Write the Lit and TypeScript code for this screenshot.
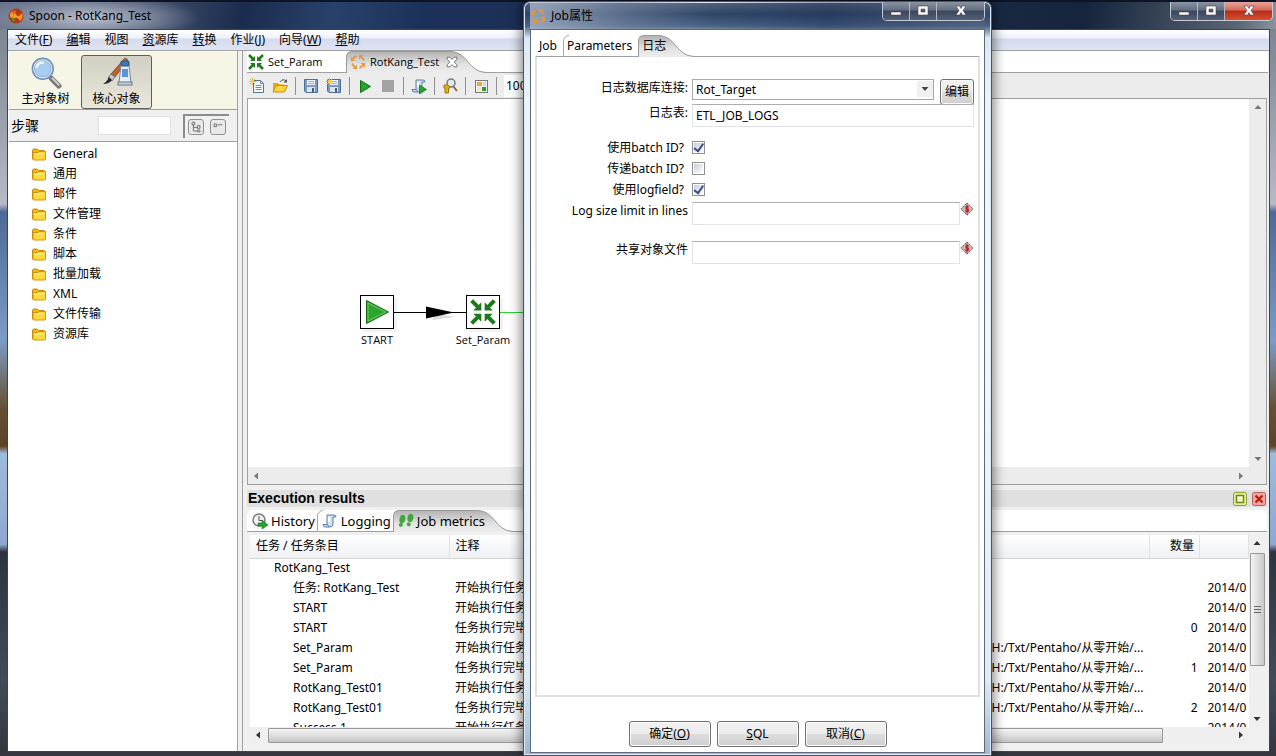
import { LitElement, html, svg, css } from "lit";
import { customElement } from "lit/decorators.js";
import { classMap } from "lit/directives/class-map.js";

const arrowsIn = svg`<g fill="none" stroke="#1c7a1c" stroke-width="2.500"><path d="M1 1l4 4M15 1l-4 4M1 15l4-4M15 15l-4-4"/></g>
  <g fill="#1c7a1c"><path d="M7 2v5H2zM9 2v5h5zM7 14V9H2zM9 14V9h5z"/></g>`;
const arrowsOut = svg`<g fill="none" stroke="#e8963c" stroke-width="1.800"><path d="M3 4.500l3.500-2.500M11.500 3l2.500 3.500M13 11.500l-3.500 2.500M4.500 13l-2.500-3.500"/></g>
  <g fill="#e8963c"><path d="M1 2.500v4.500h4.500zM13.500 1H9v4.500zM15 13.500V9h-4.500zM2.500 15H7v-4.500z"/></g>`;
const folder = svg`<path d="M1.500 4.500q0-1.500 1.500-1.500h3l1.500 1.500h5q1.500 0 1.500 1.500v7h-12.500z" fill="#f2b90c" stroke="#c4850a"/>
  <path d="M2 6.500h5l1-1h6.500v7.500q0 1-1 1h-10.500q-1 0-1-1z" fill="#ffd93a" stroke="#d09510"/><path d="M3 8h10" stroke="#fff2a0"/>`;
const star = svg`<path d="M3.500 0v7M0 3.500h7M1 1l5 5M6 1l-5 5" stroke="#f0a81c" stroke-width="1"/><circle cx="3.500" cy="3.500" r="1.800" fill="#ffd040"/>`;
const floppy = svg`<path d="M1.500 1.500h13v13h-11.500l-1.500-1.500z" fill="#7d9cbd" stroke="#4f6f92"/><rect x="4" y="2" width="8" height="5" fill="#eef4fa"/><path d="M5 3.500h6M5 5.500h6" stroke="#9bb2c8"/><rect x="4" y="9" width="8" height="5" fill="#dce5ee"/><rect x="9" y="10" width="2" height="4" fill="#3f5f82"/>`;
const scroll = svg`<path d="M5 2h7q2 0 2 2h-3v7q0 3-3 3H3q-2 0-2-2.500h4z" fill="#cfe0f2" stroke="#5f7ea4"/><path d="M3 11.500q3-1 4 2.500" fill="none" stroke="#5f7ea4"/><path d="M7 4v5" stroke="#fff" stroke-width="2"/>`;
const greenPlay = svg`<path d="M3.500 2.500v12l10-6z" fill="#24a52c" stroke="#0d7016"/>`;

const icons: Record<string, unknown> = {
  arrowsIn, arrowsOut, folder,
  spoon: svg`<circle cx="8" cy="8" r="7.500" fill="#b33a0e"/><path d="M2 5q4-4 6 1t6-1q2 4-2 8-2-4-5-3t-5-1z" fill="#f39a2c"/><path d="M3 9q3 0 4 4-3 1-4-4z" fill="#4f9a2f"/><circle cx="6" cy="4" r="2" fill="#e05a1e"/>`,
  newFile: svg`<path d="M4.500 2.500h7l3 3v9h-10z" fill="#f6f9fc" stroke="#5b738c"/><path d="M11.500 2.500v3h3M6.500 7.500h6M6.500 9.500h6M6.500 11.500h6" fill="none" stroke="#7289a0"/>${star}`,
  open: svg`<path d="M1 5h5l1.500 1.500H12V14H1z" fill="#e8a80e"/><path d="M1 14l3-6.500h11.500L12.500 14z" fill="#ffd43a" stroke="#d08a0c"/><path d="M8 4q3-4 6-1" fill="none" stroke="#555"/><path d="M15 1v3.500h-3.500z" fill="#555"/>`,
  save: floppy,
  saveAs: svg`${floppy}${star}`,
  play: greenPlay,
  stop: svg`<rect x="2" y="2" width="12" height="12" fill="#a3a3a3"/>`,
  replay: svg`${scroll}<path d="M8.500 7v9l7-4.500z" fill="#24a52c" stroke="#0d7016" stroke-width=".7"/>`,
  inspect: svg`<circle cx="9" cy="5" r="4" fill="#e2eaf0" stroke="#777" stroke-width="1.500"/><path d="M11 8l4 5" stroke="#886a3a" stroke-width="2"/><path d="M2 7h4l2 2v1H6.500v5H3v-5H2z" fill="#e4b010" stroke="#9c7408"/>`,
  results: svg`<rect x="2.500" y="2.500" width="12" height="12" fill="#f4f4f4" stroke="#777"/><rect x="4" y="4" width="5" height="4" fill="#e8a83c"/><rect x="9" y="9" width="4" height="4" fill="#2d9a40"/><path d="M4 9h4v4H4z" fill="#f4e8b8"/><path d="M10 4h3v4h-3z" fill="#c9d9ec"/>`,
  magnifier: svg`<path d="M20 20l7 7" stroke="#777" stroke-width="5" stroke-linecap="round"/><path d="M21 20l6 6" stroke="#ccc" stroke-width="2" stroke-linecap="round"/><circle cx="12" cy="11" r="9" fill="#a8cdf0" stroke="#7292bd" stroke-width="3"/><circle cx="12" cy="11" r="8.500" fill="none" stroke="#e8f2ff"/><path d="M6 10q1-5 7-5" fill="none" stroke="#fff" stroke-width="2"/>`,
  paint: svg`<path d="M24 1l3 2-13 17-4-3z" fill="#b9652a" stroke="#6d3510" stroke-width=".7"/><path d="M10 17l4 3-3 4-4-3z" fill="#c8c8c8" stroke="#777"/><path d="M8 20l3 3q-3 4-9 4 4-2 6-7z" fill="#222"/><path d="M20 8h8l2 18H18z" fill="#e6edf6" stroke="#7088a8"/><rect x="20" y="4" width="8" height="5" rx="1" fill="#3d78be" stroke="#25558f"/><rect x="21" y="12" width="6" height="8" fill="#5a93d6"/><rect x="17" y="25" width="14" height="3" fill="#c7ced8" stroke="#69788c"/>`,
  expand: svg`<path d="M3.500 2.500h3v3h-3zM5 5.500v7h4M5 8.500h4M9.500 6.500h3v3h-3zM9.500 11.500h3v2h-3z" fill="none" stroke="#666"/>`,
  collapse: svg`<path d="M3.500 4.500h3v3h-3zM8 5.500h5" fill="none" stroke="#666"/>`,
  history: svg`<circle cx="7" cy="7" r="6" fill="#f2f2f2" stroke="#7a7a7a" stroke-width="1.500"/><path d="M7 3v4.500h3" fill="none" stroke="#555"/><path d="M6 10h4V7l6 5-6 4v-3H6z" fill="#24a52c" stroke="#0d7016" stroke-width=".6"/>`,
  logging: scroll,
  feet: svg`<g fill="#3fa63f" transform="rotate(15 8 8)"><ellipse cx="4" cy="7" rx="2.900" ry="4.200"/><ellipse cx="4" cy="13" rx="2" ry="2"/><ellipse cx="11.500" cy="4" rx="2.900" ry="4.200"/><ellipse cx="11.500" cy="10.500" rx="2" ry="2"/></g>`,
  close: svg`<path d="M2.500 2.500h3l2.500 2.500 2.500-2.500h3v2.500l-3 3 3 3v2.500h-3L8 11l-2.500 2.500h-3V11l3-3-3-3z" fill="#fff" stroke="#666"/>`,
  maximize: svg`<rect x="1.500" y="1.500" width="13" height="13" rx="2" fill="#e3ef9c" stroke="#8aa02c"/><rect x="4.500" y="4.500" width="7" height="7" fill="#f4fad0" stroke="#71891c" stroke-width="1.500"/>`,
  shut: svg`<rect x="1.500" y="1.500" width="13" height="13" rx="2" fill="#f2a79c" stroke="#b36060"/><path d="M4.500 4.500l7 7M11.500 4.500l-7 7" stroke="#b81e10" stroke-width="2.400"/>`,
  variable: svg`<path d="M8 1L15 8 8 15 1 8z" fill="#c5bcae" stroke="#333" stroke-dasharray="2 1"/><path d="M10 5.500H7v2.500h2.500v2.500H6M8 3v10" fill="none" stroke="#c01030" stroke-width="1.300"/>`,
  up: svg`<path d="M4.500 10l3.500-4 3.500 4z" fill="currentColor"/>`,
  down: svg`<path d="M4.500 6l3.500 4 3.500-4z" fill="currentColor"/>`,
  left: svg`<path d="M10 4.500l-4 3.500 4 3.500z" fill="currentColor"/>`,
  right: svg`<path d="M6 4.500l4 3.500-4 3.500z" fill="currentColor"/>`,
  wmin: svg`<path d="M3 9h10v3H3z" fill="#fff" stroke="#445" stroke-width=".6"/>`,
  wmax: svg`<path d="M3 3h10v9H3zM6 6v3h4V6z" fill="#fff" fill-rule="evenodd" stroke="#445" stroke-width=".6"/>`,
  wclose: svg`<path d="M3 3h3.500L8 5.500 9.500 3H13l-3 4.500 3 4.500H9.500L8 9.500 6.500 12H3l3-4.500z" fill="#fff" stroke="#445" stroke-width=".6"/>`,
};

const icon = (name: string, size = 16, box = 16) =>
  html`<svg class="icon" width=${size} height=${size} viewBox="0 0 ${box} ${box}" aria-hidden="true">${icons[name]}</svg>`;

const tabShape = (w: number) => html`<svg class="shape" width=${w} height="22" viewBox="0 0 ${w} 22" aria-hidden="true">
  <defs><linearGradient id="tabfill" x1="0" y1="0" x2="0" y2="1"><stop offset="0" stop-color="#b2b2b2"/><stop offset=".6" stop-color="#e2e2e2"/><stop offset="1" stop-color="#ececec"/></linearGradient></defs>
  <path d="M.5 22V6Q.5.5 6 .5H${w - 35}C${w - 18} 1 ${w - 18} 21 ${w} 21.500V22z" fill="url(#tabfill)"/>
  <path d="M.5 22V6Q.5.5 6 .5H${w - 35}C${w - 18} 1 ${w - 18} 21 ${w} 21.500" fill="none" stroke="#9a9a9a"/></svg>`;
const divider = html`<svg class="divider" width="8" height="22" viewBox="0 0 8 22" aria-hidden="true"><path d="M.5 22V6Q1 1 6 .5" fill="none" stroke="#a5a5a5"/></svg>`;

const common = css`
  * { box-sizing: border-box; }
  button, input, select { font: inherit; color: inherit; }
  button { border: 0; padding: 0; margin: 0; background: none; white-space: nowrap; }
  .icon { display: block; flex: none; }
  .caption { display: flex; border: 1px solid #c3cad6; border-top: 0; border-radius: 0 0 5px 5px; overflow: hidden; height: 19px; flex: none; }
  .caption button { display: grid; place-items: center; width: 27px; border-right: 1px solid #b0b8c6; background: linear-gradient(#8b94a3, #626d80 45%, #3a465b 50%, #536077); }
  .caption button:last-child { width: 47px; border-right: 0; }
  .tab { position: relative; display: flex; align-items: center; height: 22px; flex: none; }
  .tab > * { position: relative; }
  .tab .shape { position: absolute; left: 0; top: 0; }
  .tab .divider { position: absolute; left: 0; top: 0; }
  .push { display: grid; place-items: center; border: 1px solid #707070; border-radius: 3px; box-shadow: inset 0 0 0 1px #fbfbfb; background: linear-gradient(#f2f2f2, #ebebeb 48%, #dddddd 50%, #cfcfcf); }
`;

const caption = () => html`<div class="caption">
  <button aria-label="最小化">${icon("wmin")}</button><button aria-label="最大化">${icon("wmax")}</button><button class="x" aria-label="关闭">${icon("wclose")}</button></div>`;

@customElement("job-dialog")
class JobDialog extends LitElement {
  static styles = [common, css`
    :host { display: flex; flex-direction: column; padding: 0 6px 2px 6px; border: 1px solid #4c5563; border-radius: 7px 7px 0 0; box-shadow: inset 0 0 0 1px #dfe9f4, 0 0 12px 2px rgba(0,0,0,.5);
      background: linear-gradient(#56647c, #2f4668 12px, #4b6284 24px, #d9e9f5 36px, #e8f5fa 100px, #f4f8fb 45%, #dcecf7 90%, #9db8d3); }
    .title { display: flex; align-items: center; height: 27px; flex: none; background: linear-gradient(90deg, rgba(176,188,206,.75), rgba(130,146,172,.5) 90px, transparent 180px, rgba(20,40,75,.35) 300px, rgba(90,105,130,.4)); }
    .title h2 { flex: 1; margin: 0 0 0 5px; font-size: 12px; font-weight: 400; }
    .caption { align-self: flex-start; }
    .client { flex: 1; display: flex; flex-direction: column; min-height: 0; background: #fff; border: 1px solid #5d6878; padding: 5px 4px 5px 4px; }
    .tabs { display: flex; height: 21px; flex: none; font-size: 12px; }
    .tab { padding: 0 6px 0 4px; }
    .page { flex: 1; border: solid #e0e0e0; border-width: 1px 2px 2px; border-top: 1px solid #a0a0a0; padding: 22px 4px 0 5px; }
    .grid { display: grid; grid-template-columns: 146px 1fr; column-gap: 4px; }
    .lab { text-align: right; line-height: 18px; white-space: nowrap; }
    .line { display: flex; align-items: flex-start; gap: 6px; }
    .combo { position: relative; flex: 1; display: flex; }
    .combo select { appearance: none; flex: 1; height: 21px; padding: 0 3px; border: 1px solid #a8a8a8; border-radius: 0; background: #fff; font-size: 12px; }
    .combo .icon { position: absolute; right: 1px; top: 2px; background: #f0f0f0; color: #444; pointer-events: none; }
    .edit { width: 34px; height: 26px; }
    .text { flex: 1; min-width: 0; height: 23px; padding: 0 3px; border: 1px solid #e2e3ea; border-top-color: #abadb3; background: #fff; border-radius: 0; }
    .r1 { height: 25px; } .r2 { height: 35px; } .r3 { height: 21px; } .r4 { height: 39px; }
    .r3.lab { padding-right: 4px; }
    .r3.line { padding-top: 2px; }
    .check { appearance: none; width: 13px; height: 13px; margin: 0; border: 1px solid #8e8f8f; background: linear-gradient(135deg, #c8cdd4, #fff) content-box #f6f6f6; padding: 1px; display: grid; place-items: center; }
    .check:checked::after { content: ""; width: 4px; height: 8px; border: solid #3f5090; border-width: 0 2px 2px 0; transform: rotate(35deg) translate(-1px, -1px); }
    .line.var { gap: 0; }
    .buttons { display: flex; justify-content: center; gap: 6px; padding-top: 24px; }
    .buttons .push { width: 82px; height: 26px; }
  `];

  render() {
    const check = (id: string, label: string, on: boolean) => html`
      <label class="lab r3" for=${id}>${label}</label>
      <div class="line r3"><input class="check" type="checkbox" id=${id} .checked=${on}></div>`;
    const variable = (id: string, label: string) => html`
      <label class="lab r4" for=${id}>${label}</label>
      <div class="line var r4"><input class="text" id=${id}>${icon("variable", 14)}</div>`;
    return html`
      <div class="title">${icon("arrowsOut")}<h2>Job属性</h2>${caption()}</div>
      <div class="client">
        <div class="tabs" role="tablist">
          <button class="tab" role="tab"><span>Job</span></button>
          <button class="tab" role="tab">${divider}<span>Parameters</span></button>
          <button class="tab" role="tab" aria-selected="true">${tabShape(56)}<span>日志</span></button>
        </div>
        <div class="page">
          <div class="grid">
            <label class="lab r1" for="db">日志数据库连接:</label>
            <div class="line r1"><div class="combo"><select id="db"><option>Rot_Target</option></select>${icon("down")}</div><button class="push edit">编辑</button></div>
            <label class="lab r2" for="table">日志表:</label>
            <div class="line r2"><input class="text" id="table" value="ETL_JOB_LOGS"></div>
            ${check("batch", "使用batch ID?", true)}
            ${check("pass", "传递batch ID?", false)}
            ${check("field", "使用logfield?", true)}
            ${variable("limit", "Log size limit in lines")}
            ${variable("shared", "共享对象文件")}
          </div>
        </div>
        <div class="buttons">
          <button class="push"><span>确定(<u>O</u>)</span></button>
          <button class="push"><span><u>S</u>QL</span></button>
          <button class="push"><span>取消(<u>C</u>)</span></button>
        </div>
      </div>`;
  }
}

const menus = [["", "文件(", "F", ")"], ["", "", "编", "辑"], ["", "视图", "", ""], ["", "", "资", "源库"], ["", "", "转", "换"], ["", "作业(", "J", ")"], ["", "向导(", "W", ")"], ["", "", "帮", "助"]];
const folders = ["General", "通用", "邮件", "文件管理", "条件", "脚本", "批量加载", "XML", "文件传输", "资源库"];
const path = "H:/Txt/Pentaho/从零开始/...";
const begin = "开始执行任务";
const done = "任务执行完毕";
const date = "2014/0";
const rows: [string, string, string, string, string][] = [
  ["RotKang_Test", "", "", "", ""],
  ["任务: RotKang_Test", begin, "", "", date],
  ["START", begin, "", "", date],
  ["START", done, "", "0", date],
  ["Set_Param", begin, path, "", date],
  ["Set_Param", done, path, "1", date],
  ["RotKang_Test01", begin, path, "", date],
  ["RotKang_Test01", done, path, "2", date],
  ["Success 1", begin, "", "", date],
];

@customElement("app-root")
class AppRoot extends LitElement {
  static styles = [common, css`
    :host { box-sizing: border-box; display: flex; flex-direction: column; position: relative; height: 100vh; overflow: hidden; padding: 0 6px 4px 7px; color: #000;
      font: 12px/16px "Noto Sans", "Noto Sans CJK SC", sans-serif;
      background: linear-gradient(#757d8d, #868d9a 8%, #b6bac6 27%, #4d6a94 28%, #7a9cc5 45%, #665034 54%, #5c4426 59%, #9dbbdc 60%, #8ea8d0 72%, #2b3440 73%, #424c56 90%, #33373d); }
    .title { display: flex; align-items: center; height: 29px; flex: none; margin: 0 -6px 0 -7px; padding: 0 3px 0 8px; border-top: 2px solid #0e1426;
      background: radial-gradient(ellipse 110px 24px at 90px 16px, rgba(190,196,210,.95), rgba(150,158,178,.6) 60%, transparent), linear-gradient(100deg, #69738a, #3c4b67 160px, #1b2c4e 240px, #29416a 330px, #1c315a 420px, #1b2b4b 70%, #16253d 85%, #5a6573 97%, #8a95a0); }
    .title h1 { flex: 1; margin: 0 0 0 5px; font-size: 12px; font-weight: 400; }
    .title .caption { align-self: flex-start; }
    .title .x { background: linear-gradient(#e8a49a, #d3695a 45%, #b92c16 50%, #d4512f); }
    .client { flex: 1; display: flex; flex-direction: column; min-height: 0; border: 1px solid #3c4450; background: #f0f0f0; }
    .menu { display: flex; gap: 14px; height: 21px; flex: none; padding: 0 7px; align-items: center; background: linear-gradient(#fff, #eef1f9 40%, #d5dbee 45%, #dfe4f3); border-bottom: 1px solid #a0a0a0; }
    .main { flex: 1; display: flex; gap: 4px; min-height: 0; }
    .side { width: 230px; flex: none; border-right: 1px solid #a0a0a0; background: #fff; display: flex; flex-direction: column; padding-top: 1px; }
    .modes { display: flex; height: 58px; flex: none; padding: 3px 0 0 1px; background: #f7f5e6; border-bottom: 1px solid #a0a0a0; margin-left: 1px; }
    .mode { width: 71px; height: 54px; display: flex; flex-direction: column; align-items: center; justify-content: space-between; padding: 1px 0 1px; border: 1px solid transparent; border-radius: 3px; }
    .mode.on { border-color: #5e5e5e; background: linear-gradient(#d2d0c4, #e9e7da); }
    .steps { display: flex; align-items: center; height: 32px; flex: none; background: #f0f0f0; border-bottom: 1px solid #a0a0a0; margin-left: 1px; padding: 0 8px 0 2px; }
    .steps label { font-size: 14px; width: 88px; }
    .steps input { width: 73px; height: 19px; border: 1px solid #e0e0e4; background: #fff; margin-right: 12px; }
    .pair { display: flex; gap: 6px; height: 24px; width: 47px; padding: 3px; border: solid #8c8c8c; border-width: 2px 0 0 2px; }
    .pair button { width: 16px; height: 16px; border: 1px solid #909090; border-radius: 3px; display: grid; place-items: center; background: #e9e9e9; }
    .tree { list-style: none; margin: 0; padding: 2px 0 0 23px; }
    .tree li { display: flex; align-items: center; gap: 6px; height: 20px; }
    .work { flex: 1; min-width: 0; display: flex; flex-direction: column; border-left: 1px solid #a0a0a0; padding: 0 1px 8px 4px; }
    .tabs { display: flex; height: 22px; flex: none; background: #fff; border-bottom: 1px solid #a0a0a0; }
    .files .tab { gap: 4px; padding-left: 1px; width: 99px; font: 11px/16px "Open Sans", "Noto Sans CJK SC", sans-serif; }
    .files .tab.on { width: 140px; padding-left: 4px; }
    .files .tab.on .icon:last-child { margin-left: 2px; }
    .tools { display: flex; align-items: center; height: 25px; flex: none; gap: 7px; padding: 0 2px; background: #ececec; }
    .tools hr { width: 1px; height: 18px; margin: 0; border: 0; background: #8f8f8f; }
    .tools input { width: 80px; height: 22px; border: 0; background: #fff; padding: 0 2px; }
    .sheet { flex: 1; min-height: 0; display: grid; grid-template: 1fr 17px / 1fr 17px; border: 1px solid #a0a0a0; background: #ececec; margin-right: 1px; }
    .canvas { position: relative; overflow: hidden; background: #fff; }
    .bar { display: flex; justify-content: space-between; align-items: center; color: #777; background: #ececec; }
    .bar.v { flex-direction: column; }
    .node { position: absolute; top: 196px; width: 80px; display: flex; flex-direction: column; align-items: center; gap: 3px; font: 11px/16px "Open Sans", "Noto Sans CJK SC", sans-serif; }
    .node .box { width: 34px; height: 34px; border: 1px solid #000; display: grid; place-items: center; background: #fff; box-shadow: 3px 3px 1px #f2f2f2; }
    .start { left: 89px; } .param { left: 195px; }
    .hops { position: absolute; left: 146px; top: 199px; }
    .head { display: flex; align-items: center; height: 17px; flex: none; margin-top: 5px; padding: 0 1px; background: #e0e0e0; gap: 3px; }
    .head h2 { flex: 1; margin: 0; font: bold 14px/17px "Liberation Sans", sans-serif; }
    .results { flex: none; font-size: 13px; margin: 3px 1px 0 0; border-radius: 6px 6px 0 0; }
    .results .tab { gap: 3px; padding: 0 2px 0 5px; }
    .results .tab.on { width: 120px; }
    .metrics { height: 211px; flex: none; display: grid; grid-template: 1fr 16px / 1fr 16px; padding: 3px 3px 0; background: #f0f0f0; }
    .view { overflow: hidden; background: #fff; }
    table { width: 100%; table-layout: fixed; border-collapse: collapse; }
    .c1 { width: 199px; } .c3 { width: 162px; } .c4 { width: 50px; } .c5 { width: 49px; }
    th { height: 23px; padding: 0 6px; font-weight: 400; text-align: left; background: linear-gradient(#fff, #f7f8fa 45%, #eff1f4); border-right: 1px solid #dfe1e5; border-bottom: 1px solid #d5d5d5; white-space: nowrap; }
    td { height: 20px; padding: 0 0 0 6px; white-space: nowrap; overflow: hidden; }
    td.name { padding-left: 43px; }
    td.root { padding-left: 24px; }
    th.num { text-align: right; padding-right: 5px; }
    td.num { text-align: right; padding: 0 2px 0 0; }
    td.file { padding-left: 4px; }
    td.date { padding-left: 8px; }
    .metrics .bar { color: #333; background: #efefef; }
    .bar .thumb { border: 1px solid #989898; border-radius: 1px; }
    .v .thumb { width: 15px; height: 113px; background: linear-gradient(90deg, #f4f4f4, #dedede 50%, #c8c8cc); display: grid; place-items: center; margin-top: 2px; }
    .h .thumb { flex: none; width: calc(100% - 104px); height: 15px; background: linear-gradient(#f4f4f4, #dedede 50%, #c4c4c8); margin-left: 2px; }
    .fill { flex: 1; }
    .grip { width: 7px; height: 8px; background: repeating-linear-gradient(#666 0 1px, transparent 1px 3px); }
    job-dialog { position: absolute; left: 523px; top: 1px; bottom: 0; width: 469px; }
  `];

  render() {
    const tool = (n: string) => html`<button aria-label=${n}>${icon(n)}</button>`;
    return html`
      <header class="title">${icon("spoon")}<h1>Spoon - RotKang_Test</h1>${caption()}</header>
      <div class="client">
        <nav class="menu">${menus.map(m => html`<button>${m[1]}${m[2] ? html`<u>${m[2]}</u>` : ""}${m[3]}</button>`)}</nav>
        <div class="main">
          <aside class="side">
            <div class="modes">
              <button class="mode">${icon("magnifier", 32, 30)}<span>主对象树</span></button>
              <button class="mode on">${icon("paint", 32, 32)}<span>核心对象</span></button>
            </div>
            <div class="steps"><label for="filter">步骤</label><input id="filter"><div class="pair"><button aria-label="展开">${icon("expand", 14)}</button><button aria-label="收起">${icon("collapse", 14)}</button></div></div>
            <ul class="tree">${folders.map(f => html`<li>${icon("folder")}<span>${f}</span></li>`)}</ul>
          </aside>
          <section class="work">
            <div class="tabs files" role="tablist">
              <button class="tab" role="tab">${icon("arrowsIn")}<span>Set_Param</span></button>
              <button class="tab on" role="tab" aria-selected="true">${tabShape(140)}${icon("arrowsOut")}<span>RotKang_Test</span>${icon("close", 14)}</button>
            </div>
            <div class="tools">${tool("newFile")}${tool("open")}<hr>${tool("save")}${tool("saveAs")}<hr>${tool("play")}${tool("stop")}<hr>${tool("replay")}<hr>${tool("inspect")}<hr>${tool("results")}<hr><input aria-label="缩放" value="100%"></div>
            <div class="sheet">
              <div class="canvas">
                <div class="node start"><div class="box"><svg width="28" height="28" viewBox="0 0 28 28" aria-hidden="true"><path d="M3.500 2.500v23l22-11.500z" fill="#2da52d" stroke="#126812"/><path d="M5 5v18l18-9z" fill="none" stroke="#6fcb60"/></svg></div><span>START</span></div>
                <div class="node param"><div class="box">${icon("arrowsIn", 26)}</div><span>Set_Param</span></div>
                <svg class="hops" width="400" height="30" viewBox="0 0 400 30" aria-hidden="true"><path d="M38 22l24-3-20-3z" fill="#ddd"/><path d="M0 14.500h72" stroke="#000"/><path d="M32 8.500v12l28-6z"/><path d="M106 14.500h294" stroke="#2fd02f"/></svg>
              </div>
              <div class="bar v">${icon("up")}${icon("down")}</div>
              <div class="bar">${icon("left")}${icon("right")}</div>
            </div>
            <div class="head"><h2>Execution results</h2><button aria-label="最大化">${icon("maximize")}</button><button aria-label="关闭">${icon("shut")}</button></div>
            <div class="tabs results" role="tablist">
              <button class="tab" role="tab">${icon("history")}<span>History</span></button>
              <button class="tab" role="tab">${divider}${icon("logging")}<span>Logging</span></button>
              <button class="tab on" role="tab" aria-selected="true">${tabShape(120)}${icon("feet")}<span>Job metrics</span></button>
            </div>
            <div class="metrics">
              <div class="view"><table>
                <colgroup><col class="c1"><col><col class="c3"><col class="c4"><col class="c5"></colgroup>
                <thead><tr><th>任务 / 任务条目</th><th>注释</th><th></th><th class="num">数量</th><th></th></tr></thead>
                <tbody>${rows.map((r, i) => html`<tr><td class=${classMap({ name: i > 0, root: i === 0 })}>${r[0]}</td><td>${r[1]}</td><td class="file">${r[2]}</td><td class="num">${r[3]}</td><td class="date">${r[4]}</td></tr>`)}</tbody>
              </table></div>
              <div class="bar v">${icon("up")}<div class="thumb"><div class="grip"></div></div><div class="fill"></div>${icon("down")}</div>
              <div class="bar h">${icon("left")}<div class="thumb"></div><div class="fill"></div>${icon("right")}</div>
            </div>
          </section>
        </div>
      </div>
      <job-dialog role="dialog" aria-label="Job属性"></job-dialog>`;
  }
}
